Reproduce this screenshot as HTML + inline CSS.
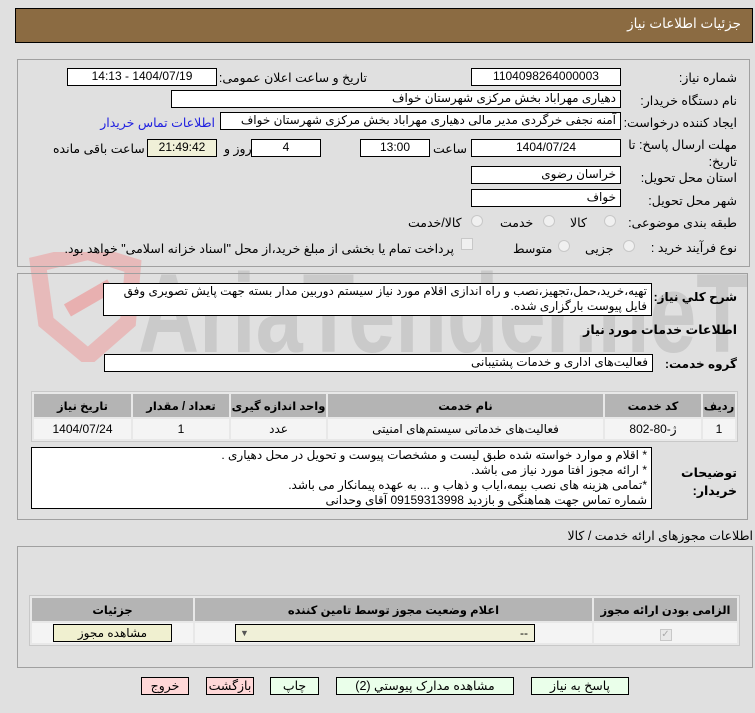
<!DOCTYPE html>
<html><head><meta charset="utf-8"><style>
*{box-sizing:border-box;margin:0;padding:0}
body{width:755px;height:713px;background:#e0e0e0;font-family:"Liberation Sans","DejaVu Sans",sans-serif;font-size:12px;color:#000;position:relative;overflow:hidden}
.a{position:absolute;white-space:nowrap}
.box{position:absolute;background:#fff;border:1px solid #000;direction:rtl;padding:0 4px;line-height:15px;white-space:nowrap;overflow:hidden}
.c{text-align:center}
.lbl{position:absolute;direction:rtl;text-align:right;white-space:nowrap;font-size:12.5px}
.panel{position:absolute;border:1px solid #a0a0a0}
.radio{position:absolute;width:12px;height:12px;border-radius:50%;border:1px solid #c8c8c8;background:#f0f0f0}
.tbl{position:absolute;border-collapse:separate;border-spacing:2px;background:#e8e8e8;border:1px solid #c8c8c8}
.tbl th{background:#b4b4b4;font-weight:bold;height:23px;font-size:11.5px;white-space:nowrap}
.tbl td{background:#f4f4f4;height:20px;text-align:center;white-space:nowrap}
.btn{position:absolute;border:1px solid #000;height:18px;line-height:16px;text-align:center;font-size:12.5px;background:#eaffea}
</style></head><body>
<svg class="a" style="left:18px;top:252px" width="740" height="110">
<path d="M20 12 L70 0 L115 14 L110 70 L70 105 L28 70 Z" fill="none" stroke="#e8b0b0" stroke-width="16" opacity="0.8"/>
<rect x="48" y="40" width="50" height="14" fill="#e8b0b0" transform="rotate(-30 70 50)"/>
<text x="120" y="100" font-family="Liberation Sans,sans-serif" font-size="112" font-weight="bold" fill="#c8c8c8" opacity="0.9" textLength="610" lengthAdjust="spacingAndGlyphs">AriaTender.neT</text>
</svg>

<div class="a" style="left:15px;top:8px;width:738px;height:35px;background:#8b6b42;border:1px solid #000"></div>
<div class="a" style="right:14px;top:16px;color:#fff;font-size:13.5px;direction:rtl">جزئیات اطلاعات نیاز</div>

<div class="panel" style="left:17px;top:59px;width:733px;height:208px"></div>
<div class="lbl" style="right:18px;top:70px">شماره نیاز:</div>
<div class="box c" style="left:471px;top:68px;width:150px;height:18px">1104098264000003</div>
<div class="lbl" style="left:221px;top:70px;width:146px">تاریخ و ساعت اعلان عمومی:</div>
<div class="box c" style="left:67px;top:68px;width:150px;height:18px">1404/07/19 - 14:13</div>

<div class="lbl" style="right:18px;top:93px">نام دستگاه خریدار:</div>
<div class="box" style="left:171px;top:90px;width:450px;height:18px">دهیاری مهراباد بخش مرکزی شهرستان خواف</div>

<div class="lbl" style="right:18px;top:115px">ایجاد کننده درخواست:</div>
<div class="box" style="left:220px;top:112px;width:401px;height:18px">آمنه نجفی خرگردی مدیر مالی  دهیاری مهراباد بخش مرکزی شهرستان خواف</div>
<div class="lbl" style="right:540px;top:115px;color:#2020e0">اطلاعات تماس خریدار</div>

<div class="lbl" style="right:18px;top:137px;line-height:17px">مهلت ارسال پاسخ: تا<br>تاریخ:</div>
<div class="box c" style="left:471px;top:139px;width:150px;height:18px">1404/07/24</div>
<div class="lbl" style="left:433px;top:141px">ساعت</div>
<div class="box c" style="left:360px;top:139px;width:70px;height:18px">13:00</div>
<div class="box c" style="left:251px;top:139px;width:70px;height:18px">4</div>
<div class="lbl" style="left:224px;top:141px">روز و</div>
<div class="box c" style="left:147px;top:139px;width:70px;height:18px;background:#f0f0d8">21:49:42</div>
<div class="lbl" style="left:53px;top:141px">ساعت باقی مانده</div>

<div class="lbl" style="right:18px;top:170px">استان محل تحویل:</div>
<div class="box" style="left:471px;top:166px;width:150px;height:18px">خراسان رضوی</div>
<div class="lbl" style="right:18px;top:193px">شهر محل تحویل:</div>
<div class="box" style="left:471px;top:189px;width:150px;height:18px">خواف</div>

<div class="lbl" style="right:18px;top:215px">طبقه بندی موضوعی:</div>
<div class="radio" style="left:604px;top:215px"></div><div class="lbl" style="left:570px;top:215px">کالا</div>
<div class="radio" style="left:543px;top:215px"></div><div class="lbl" style="left:500px;top:215px">خدمت</div>
<div class="radio" style="left:471px;top:215px"></div><div class="lbl" style="left:408px;top:215px">کالا/خدمت</div>

<div class="lbl" style="right:18px;top:240px">نوع فرآیند خرید :</div>
<div class="radio" style="left:623px;top:240px"></div><div class="lbl" style="left:585px;top:241px">جزیی</div>
<div class="radio" style="left:558px;top:240px"></div><div class="lbl" style="left:513px;top:241px">متوسط</div>
<div class="a" style="left:461px;top:238px;width:12px;height:12px;border:1px solid #c8c8c8;background:#f0f0f0"></div>
<div class="lbl" style="left:68px;top:241px;width:386px">پرداخت تمام یا بخشی از مبلغ خرید،از محل "اسناد خزانه اسلامی" خواهد بود.</div>

<div class="panel" style="left:17px;top:273px;width:731px;height:247px"></div>
<div class="lbl" style="right:18px;top:290px;font-weight:bold;font-size:12px">شرح کلي نياز:</div>
<div class="box" style="left:103px;top:283px;width:549px;height:33px;white-space:normal;line-height:15px">تهیه،خرید،حمل،تجهیز،نصب و راه اندازی اقلام مورد نیاز سیستم دوربین مدار بسته جهت پایش تصویری وفق فایل پیوست بارگزاری شده.</div>
<div class="lbl" style="right:18px;top:322px;font-weight:bold">اطلاعات خدمات مورد نیاز</div>
<div class="lbl" style="right:18px;top:357px;font-weight:bold;font-size:12px">گروه خدمت:</div>
<div class="box" style="left:104px;top:354px;width:549px;height:18px">فعالیت‌های اداری و خدمات پشتیبانی</div>

<table class="tbl" style="left:31px;top:391px;width:707px;direction:rtl">
<tr><th style="width:32px">ردیف</th><th style="width:96px">کد خدمت</th><th>نام خدمت</th><th style="width:95px">واحد اندازه گیری</th><th style="width:96px">تعداد / مقدار</th><th style="width:97px">تاریخ نیاز</th></tr>
<tr><td>1</td><td>ژ-80-802</td><td>فعالیت‌های خدماتی سیستم‌های امنیتی</td><td>عدد</td><td>1</td><td>1404/07/24</td></tr>
</table>

<div class="lbl" style="right:18px;top:464px;font-weight:bold;line-height:18px">توضیحات<br>خریدار:</div>
<div class="box" style="left:31px;top:447px;width:621px;height:62px;white-space:normal;line-height:15px">* اقلام و موارد خواسته شده طبق لیست و مشخصات پیوست و تحویل در محل دهیاری .<br>* ارائه مجوز افتا مورد نیاز می باشد.<br>*تمامی هزینه های نصب بیمه،ایاب و ذهاب و ... به عهده پیمانکار می باشد.<br>شماره تماس جهت هماهنگی و بازدید 09159313998 آقای وحدانی</div>

<div class="lbl" style="right:2px;top:528px">اطلاعات مجوزهای ارائه خدمت / کالا</div>
<div class="panel" style="left:17px;top:546px;width:736px;height:122px"></div>
<table class="tbl" style="left:29px;top:595px;width:711px;direction:rtl">
<tr><th style="width:143px">الزامی بودن ارائه مجوز</th><th>اعلام وضعیت مجوز توسط تامین کننده</th><th style="width:161px">جزئیات</th></tr>
<tr><td><span style="display:inline-block;width:12px;height:12px;border:1px solid #c8c8c8;background:#e8e8e8;color:#aaa;font-size:10px;line-height:10px">✓</span></td><td><div style="margin:0 auto 0 40px;width:300px;height:18px;border:1px solid #000;background:#f0f0d8;direction:rtl;text-align:right;padding:0 6px;line-height:16px;position:relative">--<span style="position:absolute;left:4px;font-size:9px;color:#555">▼</span></div></td><td><div style="margin:0 auto;width:119px;height:18px;border:1px solid #000;background:#f0f0d0;line-height:16px">مشاهده مجوز</div></td></tr>
</table>

<div class="btn" style="left:531px;top:677px;width:98px">پاسخ به نیاز</div>
<div class="btn" style="left:336px;top:677px;width:178px">مشاهده مدارک پیوستي (2)</div>
<div class="btn" style="left:270px;top:677px;width:49px">چاپ</div>
<div class="btn" style="left:206px;top:677px;width:48px;background:#ffd8d8">بازگشت</div>
<div class="btn" style="left:141px;top:677px;width:48px;background:#ffd8d8">خروج</div>
</body></html>
